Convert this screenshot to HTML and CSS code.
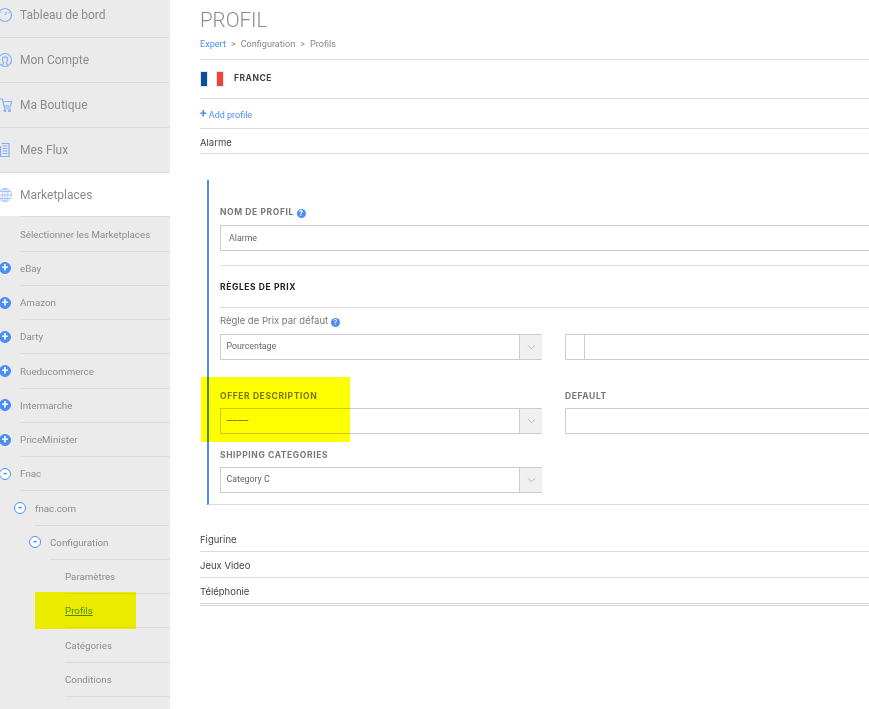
FILE: index.html
```html
<!DOCTYPE html>
<html lang="fr">
<head>
  <meta charset="UTF-8">
  <title>Profil</title>
  <meta name="viewport" content="width=device-width, initial-scale=1">
  <link rel="stylesheet" href="styles.css">
</head>
<body>
  <aside class="sidebar">
    <a class="nav-item nav-first">
      <svg class="nav-icon" viewBox="0 0 20 20"><circle cx="5" cy="10" r="6.5"/><path d="M5 10l1.500-3M0.500 7.500h1M9.500 7.500h-1"/></svg>
      Tableau de bord
    </a>
    <a class="nav-item">
      <svg class="nav-icon" viewBox="0 0 20 20"><circle cx="5" cy="10" r="6.500"/><path d="M2 16c1-1.500 1.500-2 1.500-3.500C2.500 11 2 9.500 2.500 8c.5-1.500 4.500-1.500 5 0 .5 1.500 0 3-1 4.500 0 1.500.5 2 1.500 3.500"/></svg>
      Mon Compte
    </a>
    <a class="nav-item">
      <svg class="nav-icon" viewBox="0 0 20 20"><path d="M0 4h2.500l2 9h6M3 6.500h8.500l-1 4.500H4"/><circle cx="5" cy="15.500" r="1"/><circle cx="9.500" cy="15.500" r="1"/></svg>
      Ma Boutique
    </a>
    <a class="nav-item">
      <svg class="nav-icon" viewBox="0 0 20 20"><path d="M1.500 3.500h7.500v13H0.500M2.500 6h5M2.500 8.500h5M2.500 11h5M2.500 13.500h5M0.500 6v10.500"/></svg>
      Mes Flux
    </a>
    <a class="nav-item nav-active">
      <svg class="nav-icon icon-globe" viewBox="0 0 20 20"><circle cx="5" cy="10" r="6.500"/><ellipse cx="5" cy="10" rx="3" ry="6.500"/><path d="M5 3.500v13M-1.500 10h13M-.5 6.500h11M-.5 13.500h11"/></svg>
      Marketplaces
    </a>

    <a class="sub-item sub-first">Sélectionner les Marketplaces</a>
    <a class="sub-item"><span class="toggle toggle-plus">+</span>eBay</a>
    <a class="sub-item"><span class="toggle toggle-plus">+</span>Amazon</a>
    <a class="sub-item"><span class="toggle toggle-plus">+</span>Darty</a>
    <a class="sub-item"><span class="toggle toggle-plus">+</span>Rueducommerce</a>
    <a class="sub-item"><span class="toggle toggle-plus">+</span>Intermarche</a>
    <a class="sub-item"><span class="toggle toggle-plus">+</span>PriceMinister</a>
    <a class="sub-item"><span class="toggle toggle-minus">-</span>Fnac</a>
    <a class="sub-item depth-1"><span class="toggle toggle-minus">-</span>fnac.com</a>
    <a class="sub-item depth-2"><span class="toggle toggle-minus">-</span>Configuration</a>
    <a class="sub-item depth-3">Paramètres</a>
    <a class="sub-item depth-3"><span class="current">Profils</span></a>
    <a class="sub-item depth-3">Catégories</a>
    <a class="sub-item depth-3">Conditions</a>
  </aside>

  <main class="content">
    <h1 class="page-title">PROFIL</h1>
    <div class="breadcrumb">
      <a class="link">Expert</a><span class="sep">&gt;</span>Configuration<span class="sep">&gt;</span>Profils
    </div>

    <div class="country">
      <span class="flag"><i class="flag-blue"></i><i class="flag-red"></i></span>
      <strong>FRANCE</strong>
    </div>

    <a class="add-profile link"><b>+</b> Add profile</a>
    <div class="profile-row profile-open">Alarme</div>

    <section class="profile-form">
      <label class="field-label label-name">NOM DE PROFIL <span class="help">?</span></label>
      <input class="text-input input-name" value="Alarme">

      <h2 class="section-title">RÈGLES DE PRIX</h2>

      <label class="field-label field-label-plain">Règle de Prix par défaut <span class="help">?</span></label>
      <div class="form-row">
        <div class="select">
          <span class="select-value">Pourcentage</span>
          <span class="select-arrow"><svg viewBox="0 0 10 6"><path d="M1 1l4 4 4-4"/></svg></span>
        </div>
        <div class="text-input addon-input"><span class="addon"></span></div>
      </div>

      <div class="form-row form-row-labels">
        <label class="field-label">OFFER DESCRIPTION</label>
        <label class="field-label">DEFAULT</label>
      </div>
      <div class="form-row">
        <div class="select">
          <span class="select-value select-empty">---------</span>
          <span class="select-arrow"><svg viewBox="0 0 10 6"><path d="M1 1l4 4 4-4"/></svg></span>
        </div>
        <div class="text-input"></div>
      </div>

      <label class="field-label label-shipping">SHIPPING CATEGORIES</label>
      <div class="form-row">
        <div class="select">
          <span class="select-value">Category C</span>
          <span class="select-arrow"><svg viewBox="0 0 10 6"><path d="M1 1l4 4 4-4"/></svg></span>
        </div>
      </div>
    </section>

    <div class="profile-row profile-figurine">Figurine</div>
    <div class="profile-row">Jeux Video</div>
    <div class="profile-row profile-last">Téléphonie</div>
  </main>

  <div class="marker marker-nav"></div>
  <div class="marker marker-form"></div>
</body>
</html>
```

FILE: styles.css
```css
* {
  box-sizing: border-box;
}

html, body {
  height: 100%;
}

body {
  margin: 0;
  display: flex;
  overflow: hidden;
  background: white;
  font-family: Roboto, "Liberation Sans", sans-serif;
  color: #888;
}

/* sidebar */
.sidebar {
  flex: 0 0 170px;
  background: #ebebeb;
}

.nav-item {
  display: flex;
  align-items: center;
  height: 45px;
  font-size: 12px;
  color: #8c8c8c;
  border-bottom: 1px solid #dcdcdc;
}

.nav-first {
  height: 38px;
  padding-bottom: 7px;
}

.nav-active {
  height: 43.4px;
  background: white;
  border-bottom: 0;
}

.nav-icon {
  flex: none;
  width: 20px;
  height: 20px;
  fill: none;
  stroke: #7fb0f8;
  stroke-width: 1.2;
}

.icon-globe {
  stroke: #a3c6fa;
  stroke-width: 1;
}

.sub-item {
  display: flex;
  align-items: center;
  height: 34.25px;
  margin-left: 20px;
  font-size: 9.75px;
  color: #8c8c8c;
  border-bottom: 1px solid #dcdcdc;
}

.sub-first {
  height: 35.25px;
  border-top: 1px solid #dcdcdc;
}

.depth-1 {
  margin-left: 35px;
}

.depth-2 {
  margin-left: 50px;
}

.depth-3 {
  margin-left: 65px;
}

.toggle {
  flex: none;
  display: flex;
  align-items: center;
  justify-content: center;
  width: 12px;
  height: 12px;
  margin-left: -21px;
  margin-right: 9px;
  border-radius: 50%;
  border: 1.5px solid #4a8df8;
  font-size: 12px;
  font-weight: 700;
  line-height: 1;
}

.toggle-plus {
  background: #4a8df8;
  color: white;
}

.toggle-minus {
  background: white;
  color: #4a8df8;
}

.current {
  color: #4a8df8;
  text-decoration: underline;
}

/* main column */
.content {
  flex: 1;
  min-width: 0;
  padding-left: 30px;
}

.page-title {
  margin: 0;
  padding-top: 9px;
  font-size: 20.5px;
  line-height: 23px;
  font-weight: 300;
  color: #8c8c8c;
}

.breadcrumb {
  height: 28px;
  padding-top: 6px;
  font-size: 9.1px;
  line-height: 13px;
  color: #888;
  border-bottom: 1px solid #dcdcdc;
}

.link {
  color: #4a8df8;
}

.sep {
  margin: 0 5px;
}

.country {
  display: flex;
  align-items: center;
  height: 39px;
  border-bottom: 1px solid #dcdcdc;
  font-family: Inter, "Liberation Sans", sans-serif;
  font-size: 8.5px;
  letter-spacing: 0.5px;
  color: #444;
}

.country strong {
  margin-left: 10px;
  margin-bottom: 2px;
}

.flag {
  display: flex;
  justify-content: space-between;
  width: 24px;
  height: 16px;
}

.flag i {
  width: 8px;
  border: 1px solid #e4e8f0;
}

.flag-blue {
  background: #0a4f9e;
}

.flag-red {
  background: #f44336;
}

.add-profile {
  display: block;
  height: 30px;
  padding-top: 10px;
  font-size: 9px;
  line-height: 13px;
  border-bottom: 1px solid #dcdcdc;
}

.add-profile b {
  font-size: 12px;
  line-height: 10px;
}

.profile-row {
  height: 26px;
  padding-top: 7px;
  font-family: Inter, "Liberation Sans", sans-serif;
  font-size: 9.5px;
  line-height: 13px;
  color: #444;
  border-bottom: 1px solid #dcdcdc;
}

.profile-open {
  height: 25px;
  margin-bottom: 26px;
}

.profile-figurine {
  height: 47px;
  padding-top: 28px;
}

.profile-last {
  height: 28px;
  padding-bottom: 2px;
  border-bottom: 3px double #dcdcdc;
}

/* form */
.profile-form {
  margin-left: 7px;
  height: 325px;
  padding-left: 11px;
  border-left: 2px solid #4a8df8;
  border-bottom: 1px solid #dcdcdc;
}

.field-label {
  display: block;
  font-family: Inter, "Liberation Sans", sans-serif;
  font-size: 8.5px;
  line-height: 12px;
  font-weight: 700;
  letter-spacing: 0.6px;
  color: #777;
}

.field-label-plain {
  font-size: 9.5px;
  font-weight: 400;
  letter-spacing: 0;
  padding-top: 7px;
  height: 26px;
}

.label-name {
  padding-top: 26px;
  height: 45px;
}

.label-shipping {
  height: 33px;
  padding-top: 15px;
}

.help {
  display: inline-block;
  width: 9px;
  height: 9px;
  border-radius: 50%;
  background: #4a8df8;
  color: white;
  font-size: 8px;
  line-height: 9px;
  letter-spacing: 0;
  text-align: center;
  vertical-align: -1px;
}

.text-input {
  display: block;
  flex: 1;
  height: 26px;
  padding: 0 8px;
  border: 1px solid #ccc;
  border-right: 0;
  background: white;
  font-family: Roboto, "Liberation Sans", sans-serif;
  font-size: 8.8px;
  color: #666;
  outline: 0;
}

.input-name {
  width: 100%;
}

.addon-input {
  padding: 0;
}

.addon {
  display: block;
  width: 19px;
  height: 25px;
  border-right: 1px solid #ccc;
}

.section-title {
  height: 43px;
  margin: 14px 0 0;
  padding-top: 15px;
  border-top: 1px solid #dcdcdc;
  border-bottom: 1px solid #dcdcdc;
  font-family: Inter, "Liberation Sans", sans-serif;
  font-size: 8.5px;
  line-height: 12px;
  font-weight: 700;
  letter-spacing: 0.6px;
  color: #222;
}

.form-row {
  display: flex;
  gap: 23px;
}

.form-row-labels {
  height: 48px;
  padding-top: 30px;
}

.form-row-labels .field-label:first-child {
  width: 322px;
}

.select {
  display: flex;
  flex: 0 0 322px;
  height: 26px;
  border-top: 1px solid #ccc;
  border-bottom: 1px solid #ccc;
  border-left: 1px solid #ccc;
  background: white;
}

.select-value {
  flex: 1;
  padding-left: 5.5px;
  font-size: 8.8px;
  line-height: 23px;
  color: #666;
}

.select-empty {
  color: #333;
}

.select-arrow {
  display: flex;
  align-items: center;
  justify-content: center;
  width: 23px;
  background: #f0f0f0;
  border-left: 1px solid #ccc;
}

.select-arrow svg {
  width: 9px;
  height: 6px;
  fill: none;
  stroke: #aaa;
}

/* yellow highlighter marks drawn over the screenshot */
.marker {
  position: absolute;
  background: #ffff00;
  mix-blend-mode: multiply;
}

.marker-nav {
  left: 35px;
  top: 592px;
  width: 101px;
  height: 37px;
}

.marker-form {
  left: 201px;
  top: 377px;
  width: 149px;
  height: 65px;
}
```
